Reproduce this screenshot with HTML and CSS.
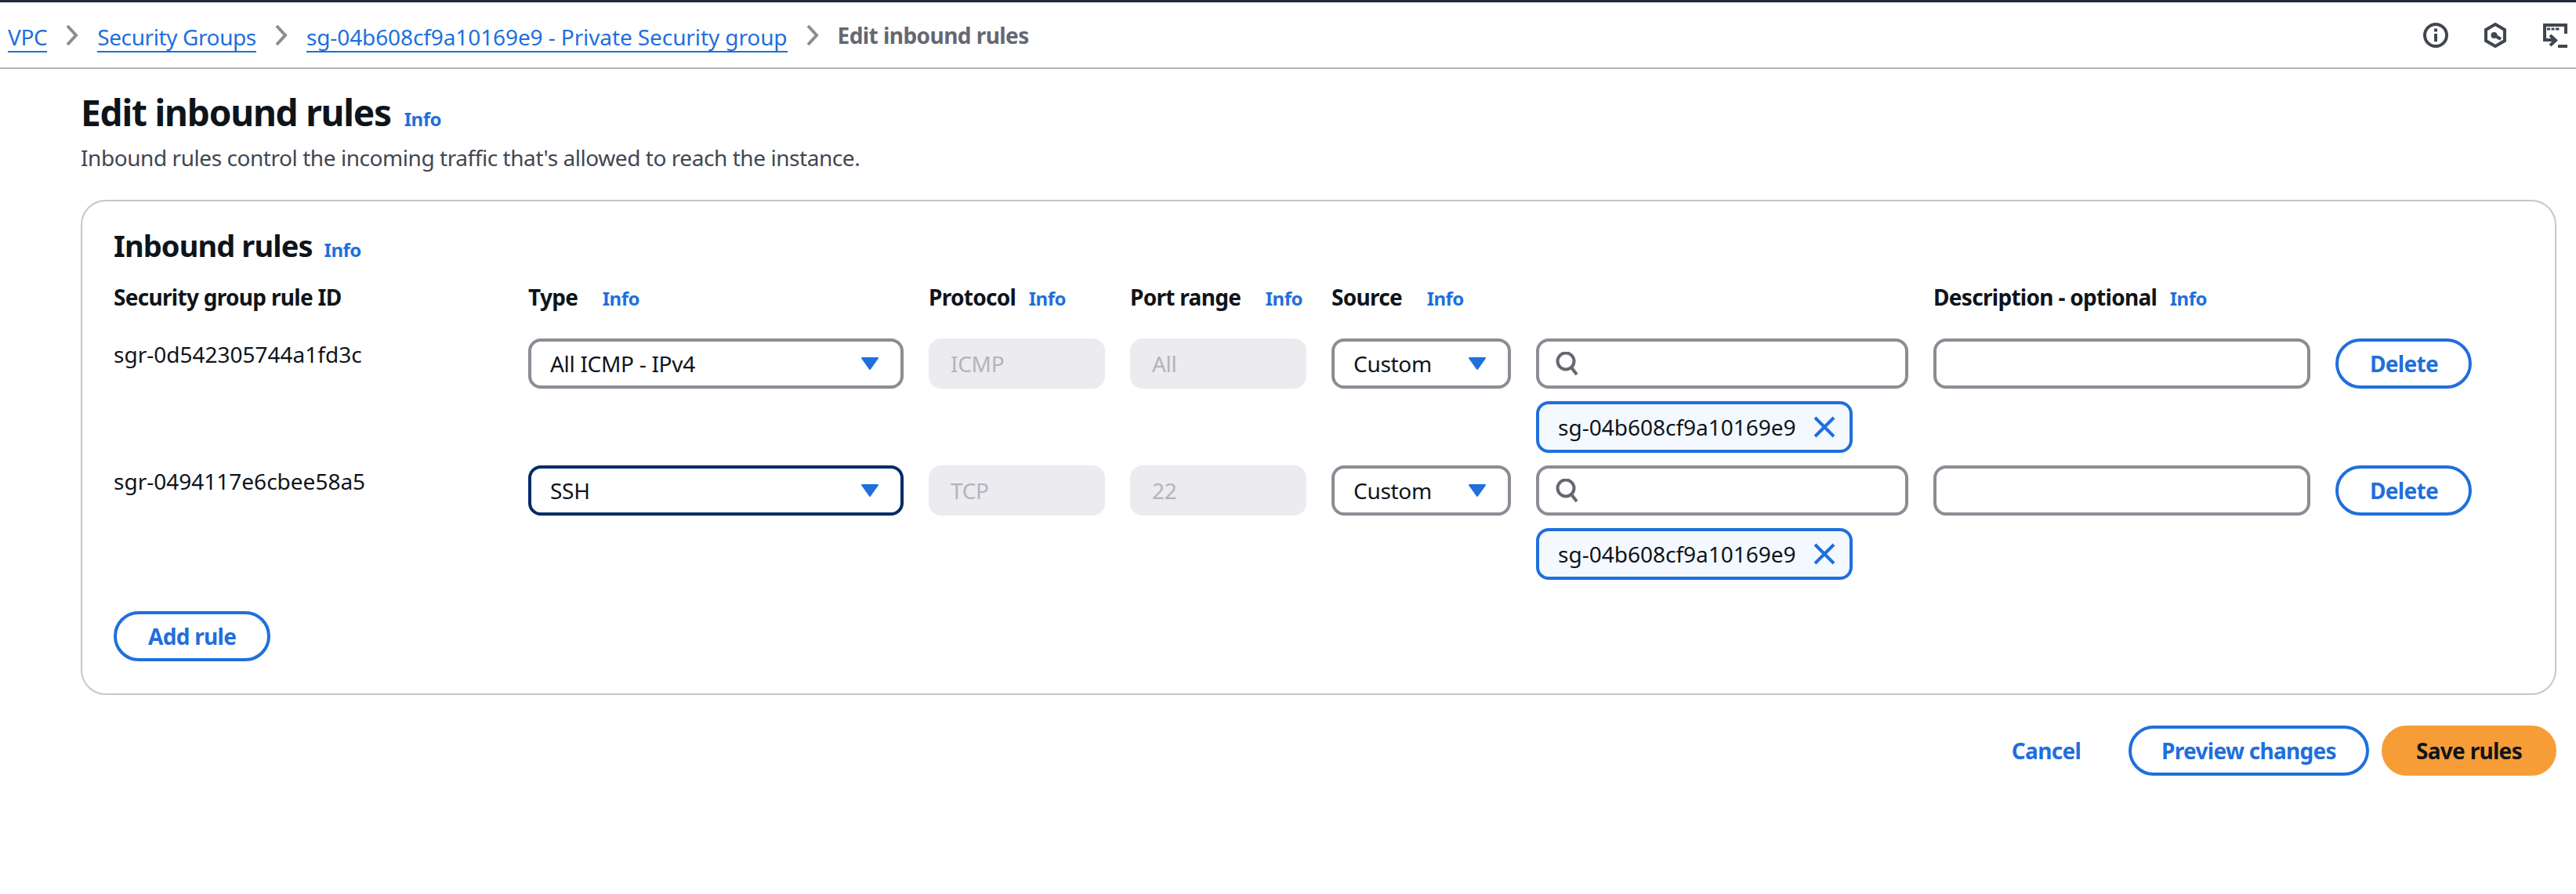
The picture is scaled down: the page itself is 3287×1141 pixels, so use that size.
FILE: index.html
```html
<!DOCTYPE html>
<html lang="en">
<head>
  <meta charset="UTF-8">
  <title>Edit inbound rules</title>
  <link rel="stylesheet" href="styles.css">
</head>
<body>

<div class="topbar"></div>

<nav class="crumbs">
  <div class="crumb-list">
    <a class="crumb" href="#">VPC</a>
    <svg class="chevron" viewBox="0 0 16 28"><path d="M2 2l11 12L2 26"/></svg>
    <a class="crumb" href="#">Security Groups</a>
    <svg class="chevron" viewBox="0 0 16 28"><path d="M2 2l11 12L2 26"/></svg>
    <a class="crumb crumb-sg" href="#">sg-04b608cf9a10169e9 - Private Security group</a>
    <svg class="chevron" viewBox="0 0 16 28"><path d="M2 2l11 12L2 26"/></svg>
    <span class="crumb-current">Edit inbound rules</span>
  </div>
  <div class="tools">
    <svg class="tool" viewBox="0 0 32 32"><circle cx="16" cy="16" r="14"/><path d="M16 14v10M16 7.500v4"/></svg>
    <svg class="tool" viewBox="0 0 32 32"><path d="M16 2l12 7v14l-12 7-12-7V9z"/><circle class="dot" cx="14.500" cy="16" r="4"/><path d="M15 16l8 5"/></svg>
    <svg class="tool" viewBox="0 0 32 32"><path d="M30 14V3H3v19h14"/><path class="thin" d="M6 8h4M11.500 8h4M17 8h4.500"/><path d="M10 16l7 6.500-7 6.500M20 30h12"/></svg>
  </div>
</nav>

<main class="page">
  <h1>Edit inbound rules <a class="info" href="#">Info</a></h1>
  <p class="lead">Inbound rules control the incoming traffic that's allowed to reach the instance.</p>

  <section class="card">
    <h2>Inbound rules <a class="info" href="#">Info</a></h2>

    <div class="grid head">
      <div>Security group rule ID</div>
      <div class="wide-info">Type <a class="info" href="#">Info</a></div>
      <div class="tight-info">Protocol <a class="info" href="#">Info</a></div>
      <div class="wide-info">Port range <a class="info" href="#">Info</a></div>
      <div class="wide-info">Source <a class="info" href="#">Info</a></div>
      <div></div>
      <div class="tight-info">Description - optional <a class="info" href="#">Info</a></div>
      <div></div>
    </div>

    <div class="grid rule">
      <div class="rule-id">sgr-0d542305744a1fd3c</div>
      <div class="field select">All ICMP - IPv4 <svg class="caret" viewBox="0 0 22 16"><path d="M1 1h20l-10 14z"/></svg></div>
      <div class="field disabled">ICMP</div>
      <div class="field disabled">All</div>
      <div class="field select">Custom <svg class="caret" viewBox="0 0 22 16"><path d="M1 1h20l-10 14z"/></svg></div>
      <div class="source">
        <div class="field search"><svg class="lens" viewBox="0 0 30 30"><circle cx="13" cy="12" r="10.500"/><path d="M20 20l7 9"/></svg></div>
        <div class="token">sg-04b608cf9a10169e9 <svg class="close" viewBox="0 0 28 28"><path d="M2 2l24 24M26 2L2 26"/></svg></div>
      </div>
      <div class="field"></div>
      <button class="btn">Delete</button>
    </div>

    <div class="grid rule">
      <div class="rule-id">sgr-0494117e6cbee58a5</div>
      <div class="field select focused">SSH <svg class="caret" viewBox="0 0 22 16"><path d="M1 1h20l-10 14z"/></svg></div>
      <div class="field disabled">TCP</div>
      <div class="field disabled">22</div>
      <div class="field select">Custom <svg class="caret" viewBox="0 0 22 16"><path d="M1 1h20l-10 14z"/></svg></div>
      <div class="source">
        <div class="field search"><svg class="lens" viewBox="0 0 30 30"><circle cx="13" cy="12" r="10.500"/><path d="M20 20l7 9"/></svg></div>
        <div class="token">sg-04b608cf9a10169e9 <svg class="close" viewBox="0 0 28 28"><path d="M2 2l24 24M26 2L2 26"/></svg></div>
      </div>
      <div class="field"></div>
      <button class="btn">Delete</button>
    </div>

    <button class="btn add">Add rule</button>
  </section>

  <div class="actions">
    <a class="cancel" href="#">Cancel</a>
    <button class="btn preview">Preview changes</button>
    <button class="btn save">Save rules</button>
  </div>
</main>

</body>
</html>
```

FILE: styles.css
```css
* {
  box-sizing: border-box;
}

body {
  margin: 0;
  background: #fff;
  color: #0f141a;
  font-family: "Noto Sans", sans-serif;
  font-size: 28px;
  line-height: 40px;
}

a {
  color: #1f6fdc;
  text-decoration: none;
}

.topbar {
  height: 3px;
  background: #232b37;
}

.crumbs {
  display: flex;
  justify-content: space-between;
  align-items: center;
  height: 85px;
  padding: 0 11px 0 10px;
  border-bottom: 2px solid #b4b4bb;
}

.crumb-list {
  display: flex;
  align-items: center;
}

.crumb {
  line-height: 36px;
  margin-top: 6px;
  border-bottom: 2px solid #1f6fdc;
  letter-spacing: -0.4px;
}

.crumb-sg {
  letter-spacing: -0.1px;
}

.crumb-current {
  font-weight: 700;
  color: #656871;
  letter-spacing: -0.55px;
}

.chevron {
  width: 16px;
  height: 28px;
  margin: 0 24px;
  fill: none;
  stroke: #8c8c94;
  stroke-width: 4;
}

.tools {
  display: flex;
  gap: 44px;
}

.tool {
  width: 32px;
  height: 32px;
  fill: none;
  stroke: #424650;
  stroke-width: 4;
}

.tool .dot {
  fill: #424650;
  stroke: none;
}

.tool .thin {
  stroke-width: 3;
}

.page {
  padding: 0 25px 0 103px;
}

h1 {
  margin: 27px 0 0;
  font-size: 46px;
  line-height: 56px;
  font-weight: 700;
  letter-spacing: -1.2px;
}

h2 {
  margin: 0;
  font-size: 38px;
  line-height: 48px;
  font-weight: 700;
  letter-spacing: -0.9px;
}

.info {
  font-size: 24px;
  line-height: 1;
  font-weight: 700;
  letter-spacing: -0.5px;
  margin-left: 6px;
}

.lead {
  margin: 10px 0 0;
  color: #424650;
  letter-spacing: -0.44px;
}

.card {
  margin-top: 34px;
  height: 632px;
  padding: 32px 40px 0;
  border: 2px solid #c6c6cd;
  border-radius: 32px;
}

.grid {
  display: grid;
  grid-template-columns: 497px 479px 225px 225px 229px 475px 481px 174px;
  column-gap: 32px;
}

.head {
  margin-top: 22px;
  margin-bottom: 33px;
  font-weight: 700;
  letter-spacing: -0.7px;
}

.head .wide-info .info {
  margin-left: 25px;
}

.head .tight-info .info {
  margin-left: 10px;
}

.rule {
  align-items: start;
  margin-bottom: 16px;
}

.field {
  display: flex;
  align-items: center;
  height: 64px;
  padding: 0 24px;
  border: 4px solid #8c8c94;
  border-radius: 16px;
  background: #fff;
  letter-spacing: -0.3px;
}

.select {
  justify-content: space-between;
  padding-right: 28px;
}

.focused {
  border-color: #002b66;
}

.disabled {
  border: 0;
  padding: 0 28px;
  background: #ebebf0;
  color: #b4b4bb;
}

.caret {
  width: 22px;
  height: 16px;
  fill: #1f6fdc;
  stroke: #1f6fdc;
  stroke-width: 2;
  stroke-linejoin: round;
}

.search {
  padding: 0 21px;
}

.lens {
  width: 30px;
  height: 30px;
  fill: none;
  stroke: #656871;
  stroke-width: 4;
}

.token {
  display: inline-flex;
  align-items: center;
  gap: 22px;
  height: 66px;
  margin-top: 16px;
  padding: 0 18px 0 24px;
  border: 4px solid #1f6fdc;
  border-radius: 16px;
  background: #f3f9ff;
}

.close {
  width: 28px;
  height: 28px;
  fill: none;
  stroke: #1f6fdc;
  stroke-width: 4;
}

.btn {
  height: 64px;
  padding: 0 40px;
  border: 4px solid #1f6fdc;
  border-radius: 32px;
  background: #fff;
  color: #1f6fdc;
  font: 700 28px/40px "Noto Sans", sans-serif;
  letter-spacing: -0.7px;
}

.add {
  margin-top: 24px;
}

.actions {
  display: flex;
  justify-content: flex-end;
  align-items: center;
  margin-top: 39px;
}

.cancel {
  font-weight: 700;
  letter-spacing: -0.7px;
  margin-right: 61px;
}

.preview {
  padding: 0 38px;
}

.save {
  margin-left: 16px;
  border-color: #f79d38;
  background: #f79d38;
  color: #0f141a;
}
```
